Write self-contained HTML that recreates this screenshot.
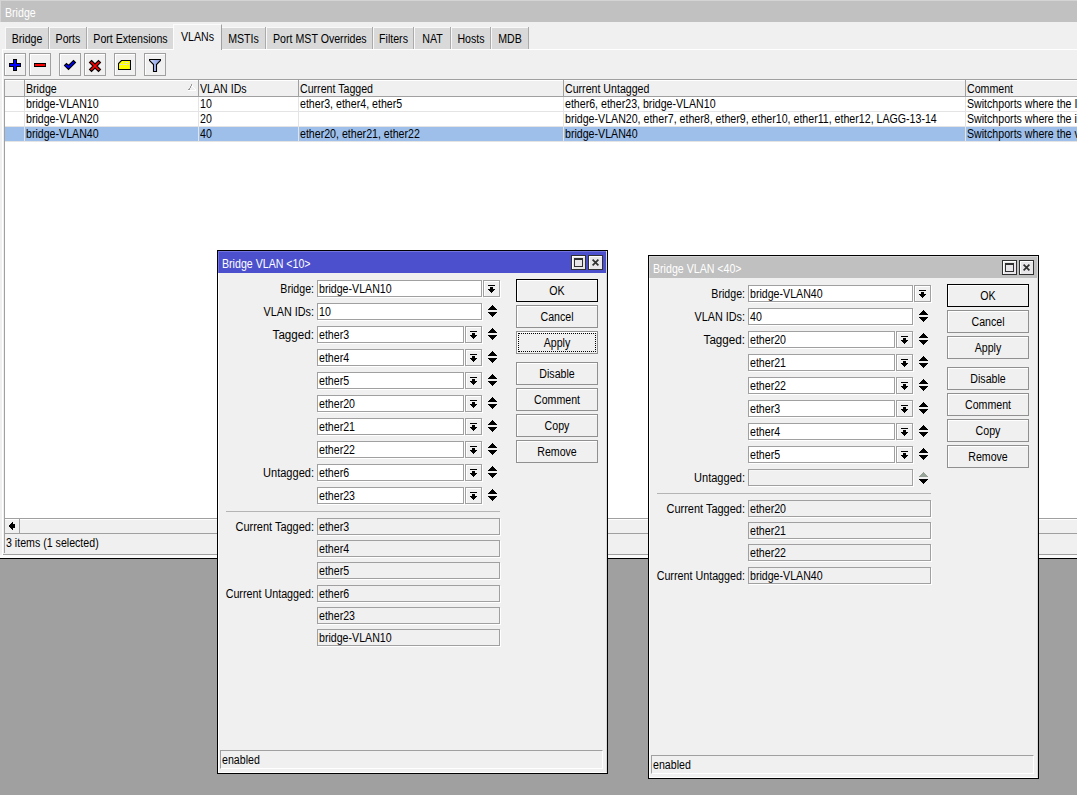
<!DOCTYPE html>
<html><head><meta charset="utf-8"><title>Bridge</title><style>
*{margin:0;padding:0;box-sizing:border-box}
html,body{width:1077px;height:795px;overflow:hidden;background:#a0a0a0}
.a{position:absolute}
.t{position:absolute;font:12px/13px "Liberation Sans",sans-serif;transform:scaleX(.885);transform-origin:0 0;white-space:nowrap;color:#000}
</style></head><body>
<div class="a" style="left:0px;top:0px;width:1077px;height:559px;background:#f0f0f0"></div>
<div class="a" style="left:0px;top:0px;width:1077px;height:22px;background:#c1c1c1"></div>
<div class="a" style="left:0px;top:0px;width:1px;height:22px;background:#d4d4d4"></div>
<div class="a" style="left:0px;top:0px;width:1077px;height:1px;background:#d4d4d4"></div>
<div class="t" style="left:5px;top:7px;color:#fff">Bridge</div>
<div class="a" style="left:5px;top:27px;width:43px;height:22px;background:#d9d9d9;border-top:1px solid #f8f8f8;border-left:1px solid #f8f8f8"></div>
<div class="a" style="left:48px;top:27px;width:1px;height:22px;background:#aaaaaa"></div>
<div class="t" style="left:6px;top:33px;width:42px;text-align:center;transform-origin:50% 0;">Bridge</div>
<div class="a" style="left:49px;top:27px;width:37px;height:22px;background:#d9d9d9;border-top:1px solid #f8f8f8;border-left:1px solid #f8f8f8"></div>
<div class="a" style="left:86px;top:27px;width:1px;height:22px;background:#aaaaaa"></div>
<div class="t" style="left:50px;top:33px;width:36px;text-align:center;transform-origin:50% 0;">Ports</div>
<div class="a" style="left:87px;top:27px;width:86px;height:22px;background:#d9d9d9;border-top:1px solid #f8f8f8;border-left:1px solid #f8f8f8"></div>
<div class="t" style="left:88px;top:33px;width:85px;text-align:center;transform-origin:50% 0;">Port Extensions</div>
<div class="a" style="left:221px;top:27px;width:44px;height:22px;background:#d9d9d9;border-top:1px solid #f8f8f8;border-left:1px solid #f8f8f8"></div>
<div class="a" style="left:265px;top:27px;width:1px;height:22px;background:#aaaaaa"></div>
<div class="t" style="left:222px;top:33px;width:43px;text-align:center;transform-origin:50% 0;">MSTIs</div>
<div class="a" style="left:266px;top:27px;width:106px;height:22px;background:#d9d9d9;border-top:1px solid #f8f8f8;border-left:1px solid #f8f8f8"></div>
<div class="a" style="left:372px;top:27px;width:1px;height:22px;background:#aaaaaa"></div>
<div class="t" style="left:267px;top:33px;width:105px;text-align:center;transform-origin:50% 0;">Port MST Overrides</div>
<div class="a" style="left:373px;top:27px;width:40px;height:22px;background:#d9d9d9;border-top:1px solid #f8f8f8;border-left:1px solid #f8f8f8"></div>
<div class="a" style="left:413px;top:27px;width:1px;height:22px;background:#aaaaaa"></div>
<div class="t" style="left:374px;top:33px;width:39px;text-align:center;transform-origin:50% 0;">Filters</div>
<div class="a" style="left:414px;top:27px;width:36px;height:22px;background:#d9d9d9;border-top:1px solid #f8f8f8;border-left:1px solid #f8f8f8"></div>
<div class="a" style="left:450px;top:27px;width:1px;height:22px;background:#aaaaaa"></div>
<div class="t" style="left:415px;top:33px;width:35px;text-align:center;transform-origin:50% 0;">NAT</div>
<div class="a" style="left:451px;top:27px;width:39px;height:22px;background:#d9d9d9;border-top:1px solid #f8f8f8;border-left:1px solid #f8f8f8"></div>
<div class="a" style="left:490px;top:27px;width:1px;height:22px;background:#aaaaaa"></div>
<div class="t" style="left:452px;top:33px;width:38px;text-align:center;transform-origin:50% 0;">Hosts</div>
<div class="a" style="left:491px;top:27px;width:37px;height:22px;background:#d9d9d9;border-top:1px solid #f8f8f8;border-left:1px solid #f8f8f8"></div>
<div class="a" style="left:528px;top:27px;width:1px;height:22px;background:#aaaaaa"></div>
<div class="t" style="left:492px;top:33px;width:36px;text-align:center;transform-origin:50% 0;">MDB</div>
<div class="a" style="left:2px;top:49px;width:1075px;height:510px;background:#f0f0f0;border-top:1px solid #fff;border-left:1px solid #fff"></div>
<div class="a" style="left:173px;top:24px;width:49px;height:26px;background:#f0f0f0;border-top:1px solid #fcfcfc;border-left:1px solid #fcfcfc;border-right:1px solid #a0a0a0"></div>
<div class="t" style="left:174px;top:31px;width:47px;text-align:center;transform-origin:50% 0;">VLANs</div>
<div class="a" style="left:4px;top:53px;width:22px;height:23px;background:#f0f0f0;border:1px solid #a0a0a0;box-shadow:inset 1px 1px 0 #fff"></div>
<div class="a" style="left:29px;top:53px;width:22px;height:23px;background:#f0f0f0;border:1px solid #a0a0a0;box-shadow:inset 1px 1px 0 #fff"></div>
<div class="a" style="left:59px;top:53px;width:22px;height:23px;background:#f0f0f0;border:1px solid #a0a0a0;box-shadow:inset 1px 1px 0 #fff"></div>
<div class="a" style="left:84px;top:53px;width:22px;height:23px;background:#f0f0f0;border:1px solid #a0a0a0;box-shadow:inset 1px 1px 0 #fff"></div>
<div class="a" style="left:114px;top:53px;width:22px;height:23px;background:#f0f0f0;border:1px solid #a0a0a0;box-shadow:inset 1px 1px 0 #fff"></div>
<div class="a" style="left:144px;top:53px;width:22px;height:23px;background:#f0f0f0;border:1px solid #a0a0a0;box-shadow:inset 1px 1px 0 #fff"></div>
<svg class="a" style="left:9px;top:59px" width="12" height="12" viewBox="0 0 12 12" shape-rendering="crispEdges"><path d="M4 0H8V4H12V8H8V12H4V8H0V4H4Z" fill="#000"/><path d="M5 1H7V5H11V7H7V11H5V7H1V5H5Z" fill="#0000ff"/></svg>
<svg class="a" style="left:34px;top:63px" width="12" height="4" viewBox="0 0 12 4" shape-rendering="crispEdges"><rect x="0" y="0" width="12" height="4" fill="#000"/><rect x="1" y="1" width="10" height="2" fill="#ff0000"/></svg>
<svg class="a" style="left:63px;top:59px" width="14" height="12" viewBox="0 0 14 12" shape-rendering="crispEdges"><path d="M1.5 6.5L3.5 4.5L5.5 6.5L10.5 1.5L12.5 3.5L5.5 10.5Z" fill="#0000ff" stroke="#000" stroke-width="1.1" stroke-linejoin="miter" shape-rendering="auto"/></svg>
<svg class="a" style="left:88px;top:59px" width="14" height="14" viewBox="0 0 14 14" shape-rendering="crispEdges"><path d="M3.5 1.5L7 5L10.5 1.5L12.5 3.5L9 7L12.5 10.5L10.5 12.5L7 9L3.5 12.5L1.5 10.5L5 7L1.5 3.5Z" fill="#ff0000" stroke="#000" stroke-width="1.1" stroke-linejoin="miter" shape-rendering="auto"/></svg>
<svg class="a" style="left:118px;top:60px" width="13" height="10" viewBox="0 0 13 10" shape-rendering="crispEdges"><path d="M3.5 0.5H12.5V9.5H0.5V3.5Z" fill="#ffff00" stroke="#000" stroke-width="1.1" shape-rendering="auto"/><path d="M6 2.5h1M8 2.5h2M2 4.5h3M6 4.5h2M9 4.5h2" stroke="#d8d8f0" stroke-width="1"/></svg>
<svg class="a" style="left:149px;top:59px" width="12" height="13" viewBox="0 0 12 13" shape-rendering="crispEdges"><defs><linearGradient id="fg" x1="0" x2="1"><stop offset="0" stop-color="#e8f0ff"/><stop offset="0.45" stop-color="#a8b8f0"/><stop offset="1" stop-color="#90a0e0"/></linearGradient></defs><path d="M0.5 0.5H11.5V1.5L7.5 5.5V12.5H4.5V5.5L0.5 1.5Z" fill="url(#fg)" stroke="#000" stroke-width="1.1" shape-rendering="auto"/></svg>
<div class="a" style="left:4px;top:79px;width:1073px;height:440px;background:#fff;border-top:1px solid #a0a0a0;border-left:1px solid #a0a0a0"></div>
<div class="a" style="left:5px;top:80px;width:1072px;height:16px;background:#f0f0f0;border-top:1px solid #fff"></div>
<div class="a" style="left:5px;top:96px;width:1072px;height:1px;background:#a0a0a0"></div>
<div class="a" style="left:24px;top:80px;width:1px;height:16px;background:#a0a0a0"></div>
<div class="a" style="left:24px;top:97px;width:1px;height:44px;background:#e4e4e4"></div>
<div class="a" style="left:198px;top:80px;width:1px;height:16px;background:#a0a0a0"></div>
<div class="a" style="left:198px;top:97px;width:1px;height:44px;background:#e4e4e4"></div>
<div class="a" style="left:298px;top:80px;width:1px;height:16px;background:#a0a0a0"></div>
<div class="a" style="left:298px;top:97px;width:1px;height:44px;background:#e4e4e4"></div>
<div class="a" style="left:563px;top:80px;width:1px;height:16px;background:#a0a0a0"></div>
<div class="a" style="left:563px;top:97px;width:1px;height:44px;background:#e4e4e4"></div>
<div class="a" style="left:965px;top:80px;width:1px;height:16px;background:#a0a0a0"></div>
<div class="a" style="left:965px;top:97px;width:1px;height:44px;background:#e4e4e4"></div>
<div class="t" style="left:26px;top:83px;">Bridge</div>
<div class="t" style="left:200px;top:83px;">VLAN IDs</div>
<div class="t" style="left:300px;top:83px;">Current Tagged</div>
<div class="t" style="left:565px;top:83px;">Current Untagged</div>
<div class="t" style="left:967px;top:83px;">Comment</div>
<svg class="a" style="left:187px;top:83px" width="10" height="9" viewBox="0 0 10 9" shape-rendering="crispEdges"><path d="M4 1h1v2h-1zM3 3h1v2h-1zM2 5h1v1h-1zM1 6h2v1h-2z" fill="#9a9a9a"/><path d="M5 2h1v2h-1zM6 4h1v1h-1zM7 5h1v1h-1zM8 6h1v1h-1zM1 7h8v1h-8z" fill="#fff"/></svg>
<div class="a" style="left:5px;top:111px;width:1072px;height:1px;background:#e4e4e4"></div>
<div class="t" style="left:26px;top:98px;">bridge-VLAN10</div>
<div class="t" style="left:200px;top:98px;">10</div>
<div class="t" style="left:300px;top:98px;">ether3, ether4, ether5</div>
<div class="t" style="left:565px;top:98px;">ether6, ether23, bridge-VLAN10</div>
<div class="t" style="left:967px;top:98px;">Switchports where the I</div>
<div class="a" style="left:5px;top:126px;width:1072px;height:1px;background:#e4e4e4"></div>
<div class="t" style="left:26px;top:113px;">bridge-VLAN20</div>
<div class="t" style="left:200px;top:113px;">20</div>
<div class="t" style="left:300px;top:113px;"></div>
<div class="t" style="left:565px;top:113px;">bridge-VLAN20, ether7, ether8, ether9, ether10, ether11, ether12, LAGG-13-14</div>
<div class="t" style="left:967px;top:113px;">Switchports where the i</div>
<div class="a" style="left:5px;top:127px;width:1072px;height:14px;background:#9dbfea"></div>
<div class="a" style="left:24px;top:127px;width:1px;height:14px;background:#e4e4e4"></div>
<div class="a" style="left:198px;top:127px;width:1px;height:14px;background:#e4e4e4"></div>
<div class="a" style="left:298px;top:127px;width:1px;height:14px;background:#e4e4e4"></div>
<div class="a" style="left:563px;top:127px;width:1px;height:14px;background:#e4e4e4"></div>
<div class="a" style="left:965px;top:127px;width:1px;height:14px;background:#e4e4e4"></div>
<div class="a" style="left:5px;top:141px;width:1072px;height:1px;background:#e4e4e4"></div>
<div class="t" style="left:26px;top:128px;">bridge-VLAN40</div>
<div class="t" style="left:200px;top:128px;">40</div>
<div class="t" style="left:300px;top:128px;">ether20, ether21, ether22</div>
<div class="t" style="left:565px;top:128px;">bridge-VLAN40</div>
<div class="t" style="left:967px;top:128px;">Switchports where the v</div>
<div class="a" style="left:4px;top:518px;width:1073px;height:1px;background:#a0a0a0"></div>
<div class="a" style="left:5px;top:519px;width:1072px;height:14px;background:#f0f0f0;border-top:1px solid #fff"></div>
<div class="a" style="left:19px;top:519px;width:1px;height:14px;background:#a0a0a0"></div>
<div class="a" style="left:4px;top:533px;width:1073px;height:1px;background:#a0a0a0"></div>
<svg class="a" style="left:9px;top:522px" width="6" height="8" viewBox="0 0 6 8" shape-rendering="crispEdges"><path d="M0 3H1V2H2V1H3V0H4V2H6V6H4V8H3V7H2V6H1V5H0Z" fill="#000"/></svg>
<div class="t" style="left:6px;top:537px;">3 items (1 selected)</div>
<div class="a" style="left:3px;top:554px;width:1074px;height:1px;background:#a0a0a0"></div>
<div class="a" style="left:4px;top:519px;width:1px;height:34px;background:#a0a0a0"></div>
<div class="a" style="left:0px;top:555px;width:1077px;height:3px;background:#fbfbfb"></div>
<div class="a" style="left:0px;top:558px;width:1077px;height:1px;background:#000"></div>
<div class="a" style="left:217px;top:250px;width:391px;height:524px;background:#f0f0f0;border:1px solid #000"></div>
<div class="a" style="left:218px;top:251px;width:389px;height:522px;border-left:1px solid #fff;border-top:1px solid #fff;border-right:1px solid #d8d8d8;border-bottom:1px solid #fff"></div>
<div class="a" style="left:218px;top:251px;width:388px;height:22px;background:#4c50cc;border-top:1px solid #7474e0;border-left:1px solid #7474e0"></div>
<div class="t" style="left:222px;top:258px;color:#fff">Bridge VLAN &lt;10&gt;</div>
<div class="a" style="left:571px;top:255px;width:15px;height:15px;background:#e8e6e8;border:1px solid #303030;box-shadow:inset 1px 1px 0 #fff"></div>
<div class="a" style="left:588px;top:255px;width:15px;height:15px;background:#e8e6e8;border:1px solid #303030;box-shadow:inset 1px 1px 0 #fff"></div>
<div class="a" style="left:574px;top:258px;width:9px;height:9px;border:1px solid #303030;border-top-width:2px;background:#e8e6e8"></div>
<svg class="a" style="left:592px;top:259px" width="7" height="7" viewBox="0 0 7 7" shape-rendering="crispEdges"><path d="M0.6 0.6L6.4 6.4M6.4 0.6L0.6 6.4" stroke="#303030" stroke-width="1.7" shape-rendering="auto"/></svg>
<div class="t" style="left:14px;top:283px;width:300px;text-align:right;transform-origin:100% 0;">Bridge:</div>
<div class="a" style="left:317px;top:280px;width:165px;height:17px;background:#fff;border:1px solid #a0a0a0;box-shadow:1px 1px 0 #fff"></div>
<div class="t" style="left:319px;top:283px;">bridge-VLAN10</div>
<div class="a" style="left:483px;top:280px;width:17px;height:17px;background:#f0f0f0;border:1px solid #a0a0a0;box-shadow:inset 1px 1px 0 #fff,1px 1px 0 #fff"></div>
<svg class="a" style="left:488px;top:285px" width="7" height="8" viewBox="0 0 7 8" shape-rendering="crispEdges"><rect x="0" y="0" width="7" height="1" fill="#000"/><rect x="2" y="2" width="3" height="2" fill="#000"/><path d="M0 4H7V5H6V6H5V7H4V8H3V7H2V6H1V5H0Z" fill="#000"/></svg>
<div class="t" style="left:14px;top:306px;width:300px;text-align:right;transform-origin:100% 0;transform:scaleX(0.9);">VLAN IDs:</div>
<div class="a" style="left:317px;top:303px;width:165px;height:17px;background:#fff;border:1px solid #a0a0a0;box-shadow:1px 1px 0 #fff"></div>
<div class="t" style="left:319px;top:306px;">10</div>
<svg class="a" style="left:488px;top:305px" width="9" height="12" viewBox="0 0 9 12" shape-rendering="crispEdges"><path d="M4 0H5V1H6V2H7V3H8V4H9V5H0V4H1V3H2V2H3V1H4Z" fill="#000"/><path d="M0 7H9V8H8V9H7V10H6V11H5V12H4V11H3V10H2V9H1V8H0Z" fill="#000"/></svg>
<div class="t" style="left:14px;top:329px;width:300px;text-align:right;transform-origin:100% 0;transform:scaleX(0.97);">Tagged:</div>
<div class="a" style="left:317px;top:326px;width:147px;height:17px;background:#fff;border:1px solid #a0a0a0;box-shadow:1px 1px 0 #fff"></div>
<div class="t" style="left:319px;top:329px;">ether3</div>
<div class="a" style="left:465px;top:326px;width:17px;height:17px;background:#f0f0f0;border:1px solid #a0a0a0;box-shadow:inset 1px 1px 0 #fff,1px 1px 0 #fff"></div>
<svg class="a" style="left:470px;top:331px" width="7" height="8" viewBox="0 0 7 8" shape-rendering="crispEdges"><rect x="0" y="0" width="7" height="1" fill="#000"/><rect x="2" y="2" width="3" height="2" fill="#000"/><path d="M0 4H7V5H6V6H5V7H4V8H3V7H2V6H1V5H0Z" fill="#000"/></svg>
<svg class="a" style="left:488px;top:328px" width="9" height="12" viewBox="0 0 9 12" shape-rendering="crispEdges"><path d="M4 0H5V1H6V2H7V3H8V4H9V5H0V4H1V3H2V2H3V1H4Z" fill="#000"/><path d="M0 7H9V8H8V9H7V10H6V11H5V12H4V11H3V10H2V9H1V8H0Z" fill="#000"/></svg>
<div class="a" style="left:317px;top:349px;width:147px;height:17px;background:#fff;border:1px solid #a0a0a0;box-shadow:1px 1px 0 #fff"></div>
<div class="t" style="left:319px;top:352px;">ether4</div>
<div class="a" style="left:465px;top:349px;width:17px;height:17px;background:#f0f0f0;border:1px solid #a0a0a0;box-shadow:inset 1px 1px 0 #fff,1px 1px 0 #fff"></div>
<svg class="a" style="left:470px;top:354px" width="7" height="8" viewBox="0 0 7 8" shape-rendering="crispEdges"><rect x="0" y="0" width="7" height="1" fill="#000"/><rect x="2" y="2" width="3" height="2" fill="#000"/><path d="M0 4H7V5H6V6H5V7H4V8H3V7H2V6H1V5H0Z" fill="#000"/></svg>
<svg class="a" style="left:488px;top:351px" width="9" height="12" viewBox="0 0 9 12" shape-rendering="crispEdges"><path d="M4 0H5V1H6V2H7V3H8V4H9V5H0V4H1V3H2V2H3V1H4Z" fill="#000"/><path d="M0 7H9V8H8V9H7V10H6V11H5V12H4V11H3V10H2V9H1V8H0Z" fill="#000"/></svg>
<div class="a" style="left:317px;top:372px;width:147px;height:17px;background:#fff;border:1px solid #a0a0a0;box-shadow:1px 1px 0 #fff"></div>
<div class="t" style="left:319px;top:375px;">ether5</div>
<div class="a" style="left:465px;top:372px;width:17px;height:17px;background:#f0f0f0;border:1px solid #a0a0a0;box-shadow:inset 1px 1px 0 #fff,1px 1px 0 #fff"></div>
<svg class="a" style="left:470px;top:377px" width="7" height="8" viewBox="0 0 7 8" shape-rendering="crispEdges"><rect x="0" y="0" width="7" height="1" fill="#000"/><rect x="2" y="2" width="3" height="2" fill="#000"/><path d="M0 4H7V5H6V6H5V7H4V8H3V7H2V6H1V5H0Z" fill="#000"/></svg>
<svg class="a" style="left:488px;top:374px" width="9" height="12" viewBox="0 0 9 12" shape-rendering="crispEdges"><path d="M4 0H5V1H6V2H7V3H8V4H9V5H0V4H1V3H2V2H3V1H4Z" fill="#000"/><path d="M0 7H9V8H8V9H7V10H6V11H5V12H4V11H3V10H2V9H1V8H0Z" fill="#000"/></svg>
<div class="a" style="left:317px;top:395px;width:147px;height:17px;background:#fff;border:1px solid #a0a0a0;box-shadow:1px 1px 0 #fff"></div>
<div class="t" style="left:319px;top:398px;">ether20</div>
<div class="a" style="left:465px;top:395px;width:17px;height:17px;background:#f0f0f0;border:1px solid #a0a0a0;box-shadow:inset 1px 1px 0 #fff,1px 1px 0 #fff"></div>
<svg class="a" style="left:470px;top:400px" width="7" height="8" viewBox="0 0 7 8" shape-rendering="crispEdges"><rect x="0" y="0" width="7" height="1" fill="#000"/><rect x="2" y="2" width="3" height="2" fill="#000"/><path d="M0 4H7V5H6V6H5V7H4V8H3V7H2V6H1V5H0Z" fill="#000"/></svg>
<svg class="a" style="left:488px;top:397px" width="9" height="12" viewBox="0 0 9 12" shape-rendering="crispEdges"><path d="M4 0H5V1H6V2H7V3H8V4H9V5H0V4H1V3H2V2H3V1H4Z" fill="#000"/><path d="M0 7H9V8H8V9H7V10H6V11H5V12H4V11H3V10H2V9H1V8H0Z" fill="#000"/></svg>
<div class="a" style="left:317px;top:418px;width:147px;height:17px;background:#fff;border:1px solid #a0a0a0;box-shadow:1px 1px 0 #fff"></div>
<div class="t" style="left:319px;top:421px;">ether21</div>
<div class="a" style="left:465px;top:418px;width:17px;height:17px;background:#f0f0f0;border:1px solid #a0a0a0;box-shadow:inset 1px 1px 0 #fff,1px 1px 0 #fff"></div>
<svg class="a" style="left:470px;top:423px" width="7" height="8" viewBox="0 0 7 8" shape-rendering="crispEdges"><rect x="0" y="0" width="7" height="1" fill="#000"/><rect x="2" y="2" width="3" height="2" fill="#000"/><path d="M0 4H7V5H6V6H5V7H4V8H3V7H2V6H1V5H0Z" fill="#000"/></svg>
<svg class="a" style="left:488px;top:420px" width="9" height="12" viewBox="0 0 9 12" shape-rendering="crispEdges"><path d="M4 0H5V1H6V2H7V3H8V4H9V5H0V4H1V3H2V2H3V1H4Z" fill="#000"/><path d="M0 7H9V8H8V9H7V10H6V11H5V12H4V11H3V10H2V9H1V8H0Z" fill="#000"/></svg>
<div class="a" style="left:317px;top:441px;width:147px;height:17px;background:#fff;border:1px solid #a0a0a0;box-shadow:1px 1px 0 #fff"></div>
<div class="t" style="left:319px;top:444px;">ether22</div>
<div class="a" style="left:465px;top:441px;width:17px;height:17px;background:#f0f0f0;border:1px solid #a0a0a0;box-shadow:inset 1px 1px 0 #fff,1px 1px 0 #fff"></div>
<svg class="a" style="left:470px;top:446px" width="7" height="8" viewBox="0 0 7 8" shape-rendering="crispEdges"><rect x="0" y="0" width="7" height="1" fill="#000"/><rect x="2" y="2" width="3" height="2" fill="#000"/><path d="M0 4H7V5H6V6H5V7H4V8H3V7H2V6H1V5H0Z" fill="#000"/></svg>
<svg class="a" style="left:488px;top:443px" width="9" height="12" viewBox="0 0 9 12" shape-rendering="crispEdges"><path d="M4 0H5V1H6V2H7V3H8V4H9V5H0V4H1V3H2V2H3V1H4Z" fill="#000"/><path d="M0 7H9V8H8V9H7V10H6V11H5V12H4V11H3V10H2V9H1V8H0Z" fill="#000"/></svg>
<div class="t" style="left:14px;top:467px;width:300px;text-align:right;transform-origin:100% 0;transform:scaleX(0.92);">Untagged:</div>
<div class="a" style="left:317px;top:464px;width:147px;height:17px;background:#fff;border:1px solid #a0a0a0;box-shadow:1px 1px 0 #fff"></div>
<div class="t" style="left:319px;top:467px;">ether6</div>
<div class="a" style="left:465px;top:464px;width:17px;height:17px;background:#f0f0f0;border:1px solid #a0a0a0;box-shadow:inset 1px 1px 0 #fff,1px 1px 0 #fff"></div>
<svg class="a" style="left:470px;top:469px" width="7" height="8" viewBox="0 0 7 8" shape-rendering="crispEdges"><rect x="0" y="0" width="7" height="1" fill="#000"/><rect x="2" y="2" width="3" height="2" fill="#000"/><path d="M0 4H7V5H6V6H5V7H4V8H3V7H2V6H1V5H0Z" fill="#000"/></svg>
<svg class="a" style="left:488px;top:466px" width="9" height="12" viewBox="0 0 9 12" shape-rendering="crispEdges"><path d="M4 0H5V1H6V2H7V3H8V4H9V5H0V4H1V3H2V2H3V1H4Z" fill="#000"/><path d="M0 7H9V8H8V9H7V10H6V11H5V12H4V11H3V10H2V9H1V8H0Z" fill="#000"/></svg>
<div class="a" style="left:317px;top:487px;width:147px;height:17px;background:#fff;border:1px solid #a0a0a0;box-shadow:1px 1px 0 #fff"></div>
<div class="t" style="left:319px;top:490px;">ether23</div>
<div class="a" style="left:465px;top:487px;width:17px;height:17px;background:#f0f0f0;border:1px solid #a0a0a0;box-shadow:inset 1px 1px 0 #fff,1px 1px 0 #fff"></div>
<svg class="a" style="left:470px;top:492px" width="7" height="8" viewBox="0 0 7 8" shape-rendering="crispEdges"><rect x="0" y="0" width="7" height="1" fill="#000"/><rect x="2" y="2" width="3" height="2" fill="#000"/><path d="M0 4H7V5H6V6H5V7H4V8H3V7H2V6H1V5H0Z" fill="#000"/></svg>
<svg class="a" style="left:488px;top:489px" width="9" height="12" viewBox="0 0 9 12" shape-rendering="crispEdges"><path d="M4 0H5V1H6V2H7V3H8V4H9V5H0V4H1V3H2V2H3V1H4Z" fill="#000"/><path d="M0 7H9V8H8V9H7V10H6V11H5V12H4V11H3V10H2V9H1V8H0Z" fill="#000"/></svg>
<div class="a" style="left:226px;top:511px;width:274px;height:1px;background:#b4b4b4"></div>
<div class="t" style="left:14px;top:521px;width:300px;text-align:right;transform-origin:100% 0;transform:scaleX(0.915);">Current Tagged:</div>
<div class="a" style="left:317px;top:518px;width:183px;height:17px;background:#f0f0f0;border:1px solid #a0a0a0;box-shadow:1px 1px 0 #fff"></div>
<div class="t" style="left:319px;top:521px;">ether3</div>
<div class="a" style="left:317px;top:540px;width:183px;height:17px;background:#f0f0f0;border:1px solid #a0a0a0;box-shadow:1px 1px 0 #fff"></div>
<div class="t" style="left:319px;top:543px;">ether4</div>
<div class="a" style="left:317px;top:562px;width:183px;height:17px;background:#f0f0f0;border:1px solid #a0a0a0;box-shadow:1px 1px 0 #fff"></div>
<div class="t" style="left:319px;top:565px;">ether5</div>
<div class="t" style="left:14px;top:588px;width:300px;text-align:right;transform-origin:100% 0;transform:scaleX(0.895);">Current Untagged:</div>
<div class="a" style="left:317px;top:585px;width:183px;height:17px;background:#f0f0f0;border:1px solid #a0a0a0;box-shadow:1px 1px 0 #fff"></div>
<div class="t" style="left:319px;top:588px;">ether6</div>
<div class="a" style="left:317px;top:607px;width:183px;height:17px;background:#f0f0f0;border:1px solid #a0a0a0;box-shadow:1px 1px 0 #fff"></div>
<div class="t" style="left:319px;top:610px;">ether23</div>
<div class="a" style="left:317px;top:629px;width:183px;height:17px;background:#f0f0f0;border:1px solid #a0a0a0;box-shadow:1px 1px 0 #fff"></div>
<div class="t" style="left:319px;top:632px;">bridge-VLAN10</div>
<div class="a" style="left:516px;top:279px;width:82px;height:23px;background:#f0f0f0;border:1px solid #000;box-shadow:inset 1px 1px 0 #fff"></div>
<div class="t" style="left:516px;top:285px;width:82px;text-align:center;transform-origin:50% 0;">OK</div>
<div class="a" style="left:516px;top:305px;width:82px;height:23px;background:#f0f0f0;border:1px solid #909090;box-shadow:inset 1px 1px 0 #fff"></div>
<div class="t" style="left:516px;top:311px;width:82px;text-align:center;transform-origin:50% 0;">Cancel</div>
<div class="a" style="left:516px;top:331px;width:82px;height:23px;background:#f0f0f0;border:1px solid #909090;box-shadow:inset 1px 1px 0 #fff"></div>
<div class="a" style="left:518px;top:333px;width:78px;height:19px;border:1px dotted #000"></div>
<div class="t" style="left:516px;top:337px;width:82px;text-align:center;transform-origin:50% 0;">Apply</div>
<div class="a" style="left:516px;top:362px;width:82px;height:23px;background:#f0f0f0;border:1px solid #909090;box-shadow:inset 1px 1px 0 #fff"></div>
<div class="t" style="left:516px;top:368px;width:82px;text-align:center;transform-origin:50% 0;">Disable</div>
<div class="a" style="left:516px;top:388px;width:82px;height:23px;background:#f0f0f0;border:1px solid #909090;box-shadow:inset 1px 1px 0 #fff"></div>
<div class="t" style="left:516px;top:394px;width:82px;text-align:center;transform-origin:50% 0;">Comment</div>
<div class="a" style="left:516px;top:414px;width:82px;height:23px;background:#f0f0f0;border:1px solid #909090;box-shadow:inset 1px 1px 0 #fff"></div>
<div class="t" style="left:516px;top:420px;width:82px;text-align:center;transform-origin:50% 0;">Copy</div>
<div class="a" style="left:516px;top:440px;width:82px;height:23px;background:#f0f0f0;border:1px solid #909090;box-shadow:inset 1px 1px 0 #fff"></div>
<div class="t" style="left:516px;top:446px;width:82px;text-align:center;transform-origin:50% 0;">Remove</div>
<div class="a" style="left:220px;top:750px;width:383px;height:19px;background:#f0f0f0;border-top:1px solid #a0a0a0;border-left:1px solid #a0a0a0;border-right:1px solid #fff;border-bottom:1px solid #fff"></div>
<div class="t" style="left:222px;top:754px;">enabled</div>
<div class="a" style="left:648px;top:255px;width:391px;height:524px;background:#f0f0f0;border:1px solid #000"></div>
<div class="a" style="left:649px;top:256px;width:389px;height:522px;border-left:1px solid #fff;border-top:1px solid #fff;border-right:1px solid #d8d8d8;border-bottom:1px solid #fff"></div>
<div class="a" style="left:649px;top:256px;width:388px;height:22px;background:#c0c0c0;border-top:1px solid #d4d4d4;border-left:1px solid #d4d4d4"></div>
<div class="t" style="left:653px;top:263px;color:#fff">Bridge VLAN &lt;40&gt;</div>
<div class="a" style="left:1002px;top:260px;width:15px;height:15px;background:#e8e6e8;border:1px solid #303030;box-shadow:inset 1px 1px 0 #fff"></div>
<div class="a" style="left:1019px;top:260px;width:15px;height:15px;background:#e8e6e8;border:1px solid #303030;box-shadow:inset 1px 1px 0 #fff"></div>
<div class="a" style="left:1005px;top:263px;width:9px;height:9px;border:1px solid #303030;border-top-width:2px;background:#e8e6e8"></div>
<svg class="a" style="left:1023px;top:264px" width="7" height="7" viewBox="0 0 7 7" shape-rendering="crispEdges"><path d="M0.6 0.6L6.4 6.4M6.4 0.6L0.6 6.4" stroke="#303030" stroke-width="1.7" shape-rendering="auto"/></svg>
<div class="t" style="left:445px;top:288px;width:300px;text-align:right;transform-origin:100% 0;">Bridge:</div>
<div class="a" style="left:748px;top:285px;width:165px;height:17px;background:#fff;border:1px solid #a0a0a0;box-shadow:1px 1px 0 #fff"></div>
<div class="t" style="left:750px;top:288px;">bridge-VLAN40</div>
<div class="a" style="left:914px;top:285px;width:17px;height:17px;background:#f0f0f0;border:1px solid #a0a0a0;box-shadow:inset 1px 1px 0 #fff,1px 1px 0 #fff"></div>
<svg class="a" style="left:919px;top:290px" width="7" height="8" viewBox="0 0 7 8" shape-rendering="crispEdges"><rect x="0" y="0" width="7" height="1" fill="#000"/><rect x="2" y="2" width="3" height="2" fill="#000"/><path d="M0 4H7V5H6V6H5V7H4V8H3V7H2V6H1V5H0Z" fill="#000"/></svg>
<div class="t" style="left:445px;top:311px;width:300px;text-align:right;transform-origin:100% 0;transform:scaleX(0.9);">VLAN IDs:</div>
<div class="a" style="left:748px;top:308px;width:165px;height:17px;background:#fff;border:1px solid #a0a0a0;box-shadow:1px 1px 0 #fff"></div>
<div class="t" style="left:750px;top:311px;">40</div>
<svg class="a" style="left:919px;top:310px" width="9" height="12" viewBox="0 0 9 12" shape-rendering="crispEdges"><path d="M4 0H5V1H6V2H7V3H8V4H9V5H0V4H1V3H2V2H3V1H4Z" fill="#000"/><path d="M0 7H9V8H8V9H7V10H6V11H5V12H4V11H3V10H2V9H1V8H0Z" fill="#000"/></svg>
<div class="t" style="left:445px;top:334px;width:300px;text-align:right;transform-origin:100% 0;transform:scaleX(0.97);">Tagged:</div>
<div class="a" style="left:748px;top:331px;width:147px;height:17px;background:#fff;border:1px solid #a0a0a0;box-shadow:1px 1px 0 #fff"></div>
<div class="t" style="left:750px;top:334px;">ether20</div>
<div class="a" style="left:896px;top:331px;width:17px;height:17px;background:#f0f0f0;border:1px solid #a0a0a0;box-shadow:inset 1px 1px 0 #fff,1px 1px 0 #fff"></div>
<svg class="a" style="left:901px;top:336px" width="7" height="8" viewBox="0 0 7 8" shape-rendering="crispEdges"><rect x="0" y="0" width="7" height="1" fill="#000"/><rect x="2" y="2" width="3" height="2" fill="#000"/><path d="M0 4H7V5H6V6H5V7H4V8H3V7H2V6H1V5H0Z" fill="#000"/></svg>
<svg class="a" style="left:919px;top:333px" width="9" height="12" viewBox="0 0 9 12" shape-rendering="crispEdges"><path d="M4 0H5V1H6V2H7V3H8V4H9V5H0V4H1V3H2V2H3V1H4Z" fill="#000"/><path d="M0 7H9V8H8V9H7V10H6V11H5V12H4V11H3V10H2V9H1V8H0Z" fill="#000"/></svg>
<div class="a" style="left:748px;top:354px;width:147px;height:17px;background:#fff;border:1px solid #a0a0a0;box-shadow:1px 1px 0 #fff"></div>
<div class="t" style="left:750px;top:357px;">ether21</div>
<div class="a" style="left:896px;top:354px;width:17px;height:17px;background:#f0f0f0;border:1px solid #a0a0a0;box-shadow:inset 1px 1px 0 #fff,1px 1px 0 #fff"></div>
<svg class="a" style="left:901px;top:359px" width="7" height="8" viewBox="0 0 7 8" shape-rendering="crispEdges"><rect x="0" y="0" width="7" height="1" fill="#000"/><rect x="2" y="2" width="3" height="2" fill="#000"/><path d="M0 4H7V5H6V6H5V7H4V8H3V7H2V6H1V5H0Z" fill="#000"/></svg>
<svg class="a" style="left:919px;top:356px" width="9" height="12" viewBox="0 0 9 12" shape-rendering="crispEdges"><path d="M4 0H5V1H6V2H7V3H8V4H9V5H0V4H1V3H2V2H3V1H4Z" fill="#000"/><path d="M0 7H9V8H8V9H7V10H6V11H5V12H4V11H3V10H2V9H1V8H0Z" fill="#000"/></svg>
<div class="a" style="left:748px;top:377px;width:147px;height:17px;background:#fff;border:1px solid #a0a0a0;box-shadow:1px 1px 0 #fff"></div>
<div class="t" style="left:750px;top:380px;">ether22</div>
<div class="a" style="left:896px;top:377px;width:17px;height:17px;background:#f0f0f0;border:1px solid #a0a0a0;box-shadow:inset 1px 1px 0 #fff,1px 1px 0 #fff"></div>
<svg class="a" style="left:901px;top:382px" width="7" height="8" viewBox="0 0 7 8" shape-rendering="crispEdges"><rect x="0" y="0" width="7" height="1" fill="#000"/><rect x="2" y="2" width="3" height="2" fill="#000"/><path d="M0 4H7V5H6V6H5V7H4V8H3V7H2V6H1V5H0Z" fill="#000"/></svg>
<svg class="a" style="left:919px;top:379px" width="9" height="12" viewBox="0 0 9 12" shape-rendering="crispEdges"><path d="M4 0H5V1H6V2H7V3H8V4H9V5H0V4H1V3H2V2H3V1H4Z" fill="#000"/><path d="M0 7H9V8H8V9H7V10H6V11H5V12H4V11H3V10H2V9H1V8H0Z" fill="#000"/></svg>
<div class="a" style="left:748px;top:400px;width:147px;height:17px;background:#fff;border:1px solid #a0a0a0;box-shadow:1px 1px 0 #fff"></div>
<div class="t" style="left:750px;top:403px;">ether3</div>
<div class="a" style="left:896px;top:400px;width:17px;height:17px;background:#f0f0f0;border:1px solid #a0a0a0;box-shadow:inset 1px 1px 0 #fff,1px 1px 0 #fff"></div>
<svg class="a" style="left:901px;top:405px" width="7" height="8" viewBox="0 0 7 8" shape-rendering="crispEdges"><rect x="0" y="0" width="7" height="1" fill="#000"/><rect x="2" y="2" width="3" height="2" fill="#000"/><path d="M0 4H7V5H6V6H5V7H4V8H3V7H2V6H1V5H0Z" fill="#000"/></svg>
<svg class="a" style="left:919px;top:402px" width="9" height="12" viewBox="0 0 9 12" shape-rendering="crispEdges"><path d="M4 0H5V1H6V2H7V3H8V4H9V5H0V4H1V3H2V2H3V1H4Z" fill="#000"/><path d="M0 7H9V8H8V9H7V10H6V11H5V12H4V11H3V10H2V9H1V8H0Z" fill="#000"/></svg>
<div class="a" style="left:748px;top:423px;width:147px;height:17px;background:#fff;border:1px solid #a0a0a0;box-shadow:1px 1px 0 #fff"></div>
<div class="t" style="left:750px;top:426px;">ether4</div>
<div class="a" style="left:896px;top:423px;width:17px;height:17px;background:#f0f0f0;border:1px solid #a0a0a0;box-shadow:inset 1px 1px 0 #fff,1px 1px 0 #fff"></div>
<svg class="a" style="left:901px;top:428px" width="7" height="8" viewBox="0 0 7 8" shape-rendering="crispEdges"><rect x="0" y="0" width="7" height="1" fill="#000"/><rect x="2" y="2" width="3" height="2" fill="#000"/><path d="M0 4H7V5H6V6H5V7H4V8H3V7H2V6H1V5H0Z" fill="#000"/></svg>
<svg class="a" style="left:919px;top:425px" width="9" height="12" viewBox="0 0 9 12" shape-rendering="crispEdges"><path d="M4 0H5V1H6V2H7V3H8V4H9V5H0V4H1V3H2V2H3V1H4Z" fill="#000"/><path d="M0 7H9V8H8V9H7V10H6V11H5V12H4V11H3V10H2V9H1V8H0Z" fill="#000"/></svg>
<div class="a" style="left:748px;top:446px;width:147px;height:17px;background:#fff;border:1px solid #a0a0a0;box-shadow:1px 1px 0 #fff"></div>
<div class="t" style="left:750px;top:449px;">ether5</div>
<div class="a" style="left:896px;top:446px;width:17px;height:17px;background:#f0f0f0;border:1px solid #a0a0a0;box-shadow:inset 1px 1px 0 #fff,1px 1px 0 #fff"></div>
<svg class="a" style="left:901px;top:451px" width="7" height="8" viewBox="0 0 7 8" shape-rendering="crispEdges"><rect x="0" y="0" width="7" height="1" fill="#000"/><rect x="2" y="2" width="3" height="2" fill="#000"/><path d="M0 4H7V5H6V6H5V7H4V8H3V7H2V6H1V5H0Z" fill="#000"/></svg>
<svg class="a" style="left:919px;top:448px" width="9" height="12" viewBox="0 0 9 12" shape-rendering="crispEdges"><path d="M4 0H5V1H6V2H7V3H8V4H9V5H0V4H1V3H2V2H3V1H4Z" fill="#000"/><path d="M0 7H9V8H8V9H7V10H6V11H5V12H4V11H3V10H2V9H1V8H0Z" fill="#000"/></svg>
<div class="t" style="left:445px;top:472px;width:300px;text-align:right;transform-origin:100% 0;transform:scaleX(0.92);">Untagged:</div>
<div class="a" style="left:748px;top:469px;width:165px;height:17px;background:#f0f0f0;border:1px solid #a0a0a0;box-shadow:inset 1px 1px 0 #f6f6f6,1px 1px 0 #fff"></div>
<svg class="a" style="left:919px;top:472px" width="9" height="12" viewBox="0 0 9 12" shape-rendering="crispEdges"><path d="M4 0H5V1H6V2H7V3H8V4H9V5H0V4H1V3H2V2H3V1H4Z" fill="#98a398"/><path d="M0 7H9V8H8V9H7V10H6V11H5V12H4V11H3V10H2V9H1V8H0Z" fill="#000"/></svg>
<div class="a" style="left:657px;top:493px;width:274px;height:1px;background:#b4b4b4"></div>
<div class="t" style="left:445px;top:503px;width:300px;text-align:right;transform-origin:100% 0;transform:scaleX(0.915);">Current Tagged:</div>
<div class="a" style="left:748px;top:500px;width:183px;height:17px;background:#f0f0f0;border:1px solid #a0a0a0;box-shadow:1px 1px 0 #fff"></div>
<div class="t" style="left:750px;top:503px;">ether20</div>
<div class="a" style="left:748px;top:522px;width:183px;height:17px;background:#f0f0f0;border:1px solid #a0a0a0;box-shadow:1px 1px 0 #fff"></div>
<div class="t" style="left:750px;top:525px;">ether21</div>
<div class="a" style="left:748px;top:544px;width:183px;height:17px;background:#f0f0f0;border:1px solid #a0a0a0;box-shadow:1px 1px 0 #fff"></div>
<div class="t" style="left:750px;top:547px;">ether22</div>
<div class="t" style="left:445px;top:570px;width:300px;text-align:right;transform-origin:100% 0;transform:scaleX(0.895);">Current Untagged:</div>
<div class="a" style="left:748px;top:567px;width:183px;height:17px;background:#f0f0f0;border:1px solid #a0a0a0;box-shadow:1px 1px 0 #fff"></div>
<div class="t" style="left:750px;top:570px;">bridge-VLAN40</div>
<div class="a" style="left:947px;top:284px;width:82px;height:23px;background:#f0f0f0;border:1px solid #000;box-shadow:inset 1px 1px 0 #fff"></div>
<div class="t" style="left:947px;top:290px;width:82px;text-align:center;transform-origin:50% 0;">OK</div>
<div class="a" style="left:947px;top:310px;width:82px;height:23px;background:#f0f0f0;border:1px solid #909090;box-shadow:inset 1px 1px 0 #fff"></div>
<div class="t" style="left:947px;top:316px;width:82px;text-align:center;transform-origin:50% 0;">Cancel</div>
<div class="a" style="left:947px;top:336px;width:82px;height:23px;background:#f0f0f0;border:1px solid #909090;box-shadow:inset 1px 1px 0 #fff"></div>
<div class="t" style="left:947px;top:342px;width:82px;text-align:center;transform-origin:50% 0;">Apply</div>
<div class="a" style="left:947px;top:367px;width:82px;height:23px;background:#f0f0f0;border:1px solid #909090;box-shadow:inset 1px 1px 0 #fff"></div>
<div class="t" style="left:947px;top:373px;width:82px;text-align:center;transform-origin:50% 0;">Disable</div>
<div class="a" style="left:947px;top:393px;width:82px;height:23px;background:#f0f0f0;border:1px solid #909090;box-shadow:inset 1px 1px 0 #fff"></div>
<div class="t" style="left:947px;top:399px;width:82px;text-align:center;transform-origin:50% 0;">Comment</div>
<div class="a" style="left:947px;top:419px;width:82px;height:23px;background:#f0f0f0;border:1px solid #909090;box-shadow:inset 1px 1px 0 #fff"></div>
<div class="t" style="left:947px;top:425px;width:82px;text-align:center;transform-origin:50% 0;">Copy</div>
<div class="a" style="left:947px;top:445px;width:82px;height:23px;background:#f0f0f0;border:1px solid #909090;box-shadow:inset 1px 1px 0 #fff"></div>
<div class="t" style="left:947px;top:451px;width:82px;text-align:center;transform-origin:50% 0;">Remove</div>
<div class="a" style="left:651px;top:755px;width:383px;height:19px;background:#f0f0f0;border-top:1px solid #a0a0a0;border-left:1px solid #a0a0a0;border-right:1px solid #fff;border-bottom:1px solid #fff"></div>
<div class="t" style="left:653px;top:759px;">enabled</div>
</body></html>
